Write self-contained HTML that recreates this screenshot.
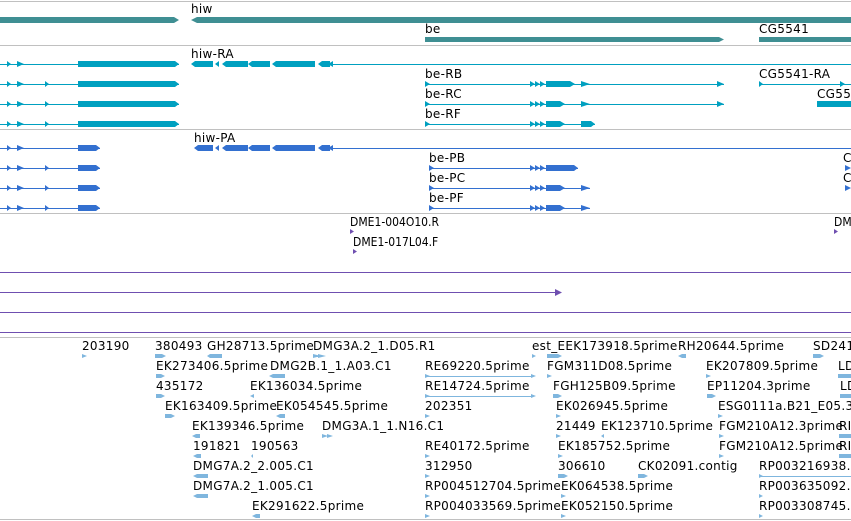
<!DOCTYPE html>
<html><head><meta charset="utf-8"><style>
html,body{margin:0;padding:0;background:#fff;width:851px;height:521px;overflow:hidden}
svg{display:block}
text{font-family:"DejaVu Sans","Liberation Sans",sans-serif;font-size:12px;fill:#000;letter-spacing:0.3px}
.c text{font-family:"DejaVu Sans Condensed","DejaVu Sans",sans-serif;font-stretch:condensed;letter-spacing:0}
</style></head><body>
<svg width="851" height="521" viewBox="0 0 851 521" xmlns="http://www.w3.org/2000/svg">
<g stroke="#c0c0c0" stroke-width="1">
<line x1="0" y1="1.5" x2="851" y2="1.5"/>
<line x1="0" y1="45.5" x2="851" y2="45.5"/>
<line x1="0" y1="129.5" x2="851" y2="129.5"/>
<line x1="0" y1="213.5" x2="851" y2="213.5"/>
<line x1="0" y1="337.5" x2="851" y2="337.5"/>
<line x1="0" y1="519.5" x2="851" y2="519.5"/>
</g>
<g fill="#3f8f93">
<polygon points="0,17 174,17 179,20 174,23 0,23"/>
<polygon points="191,20 197,17 851,17 851,23 197,23"/>
<polygon points="425,37 719,37 724,39.5 719,42 425,42"/>
<rect x="759" y="37" width="92" height="5"/>
</g>
<text x="191" y="13">hiw</text>
<text x="425" y="33">be</text>
<text x="759" y="33">CG5541</text>
<g fill="#00a0c0" stroke="none">
<rect x="0" y="64" width="179" height="1"/><rect x="0" y="84" width="179" height="1"/><rect x="0" y="104" width="179" height="1"/><rect x="0" y="124" width="179" height="1"/>
<rect x="333" y="64" width="518" height="1"/>
<rect x="425" y="84" width="299" height="1"/><rect x="425" y="104" width="299" height="1"/><rect x="425" y="124" width="170" height="1"/>
<rect x="759" y="84" width="92" height="1"/>
</g>
<g fill="#00a0c0">
<path d="M7,61 11,64 7,67Z M17,61 24,64 17,67Z M78,61 175,61 179,64 175,67 78,67Z"/>
<path d="M7,81 11,84 7,87Z M17,81 24,84 17,87Z M45,81 49,84 45,87Z M78,81 175,81 179,84 175,87 78,87Z"/>
<path d="M7,101 11,104 7,107Z M17,101 24,104 17,107Z M45,101 49,104 45,107Z M78,101 175,101 179,104 175,107 78,107Z"/>
<path d="M7,121 11,124 7,127Z M17,121 24,124 17,127Z M45,121 49,124 45,127Z M78,121 175,121 179,124 175,127 78,127Z"/>
<path d="M191,64 195,61 213,61 213,67 195,67Z M203,64 207,61 207,67Z M209,64 213,61 213,67Z M215,64 219,61 219,67Z M222,64 226,61 248,61 248,67 226,67Z M248,64 252,61 270,61 270,67 252,67Z M272,64 276,61 315,61 315,67 276,67Z M318,64 322,61 330,61 330,67 322,67Z M328,64 333,61 333,67Z"/>
<path d="M425,81 430,84 425,87Z M530,81 535,84 530,87Z M535,81 540,84 535,87Z M540,81 545,84 540,87Z M546,81 570,81 575,84 570,87 546,87Z M581,81 590,84 581,87Z M717,81 724,84 717,87Z"/>
<path d="M425,101 430,104 425,107Z M530,101 535,104 530,107Z M535,101 540,104 535,107Z M540,101 545,104 540,107Z M546,101 560,101 565,104 560,107 546,107Z M581,101 590,104 581,107Z M717,101 724,104 717,107Z"/>
<path d="M425,121 430,124 425,127Z M530,121 535,124 530,127Z M535,121 540,124 535,127Z M540,121 545,124 540,127Z M546,121 560,121 565,124 560,127 546,127Z M581,121 591,121 595,124 591,127 581,127Z"/>
<path d="M759,81 763,84 759,87Z M840,81 845,84 840,87Z M817,101 851,101 851,107 817,107Z"/>
</g>
<text x="191" y="58">hiw-RA</text>
<text x="425" y="78">be-RB</text>
<text x="425" y="98">be-RC</text>
<text x="425" y="118">be-RF</text>
<text x="759" y="78">CG5541-RA</text>
<text x="817" y="98">CG55</text>
<g fill="#3370d0">
<rect x="0" y="148" width="100" height="1"/><rect x="0" y="168" width="100" height="1"/><rect x="0" y="188" width="100" height="1"/><rect x="0" y="208" width="100" height="1"/>
<rect x="333" y="148" width="518" height="1"/>
<rect x="429" y="168" width="149" height="1"/><rect x="429" y="188" width="161" height="1"/><rect x="429" y="208" width="161" height="1"/>
<path d="M7,145 11,148 7,151Z M17,145 24,148 17,151Z M78,145 96,145 100,148 96,151 78,151Z"/>
<path d="M7,165 11,168 7,171Z M17,165 24,168 17,171Z M45,165 49,168 45,171Z M78,165 96,165 100,168 96,171 78,171Z"/>
<path d="M7,185 11,188 7,191Z M17,185 24,188 17,191Z M45,185 49,188 45,191Z M78,185 96,185 100,188 96,191 78,191Z"/>
<path d="M7,205 11,208 7,211Z M17,205 24,208 17,211Z M45,205 49,208 45,211Z M78,205 96,205 100,208 96,211 78,211Z"/>
<path d="M194,148 198,145 213,145 213,151 198,151Z M203,148 207,145 207,151Z M209,148 213,145 213,151Z M215,148 219,145 219,151Z M222,148 226,145 248,145 248,151 226,151Z M248,148 252,145 270,145 270,151 252,151Z M272,148 276,145 315,145 315,151 276,151Z M318,148 322,145 330,145 330,151 322,151Z M328,148 333,145 333,151Z"/>
<path d="M429,165 434,168 429,171Z M530,165 535,168 530,171Z M535,165 540,168 535,171Z M540,165 545,168 540,171Z M546,165 574,165 578,168 574,171 546,171Z"/>
<path d="M429,185 434,188 429,191Z M530,185 535,188 530,191Z M535,185 540,188 535,191Z M540,185 545,188 540,191Z M546,185 560,185 565,188 560,191 546,191Z M581,185 590,188 581,191Z"/>
<path d="M429,205 434,208 429,211Z M530,205 535,208 530,211Z M535,205 540,208 535,211Z M540,205 545,208 540,211Z M546,205 560,205 565,208 560,211 546,211Z M581,205 590,208 581,211Z"/>
<path d="M845,165 851,168 845,171Z M845,185 851,188 845,191Z"/>
</g>
<text x="191" y="142" dx="3">hiw-PA</text>
<text x="429" y="162">be-PB</text>
<text x="429" y="182">be-PC</text>
<text x="429" y="202">be-PF</text>
<text x="843" y="162">C</text>
<text x="843" y="182">C</text>
<g class="c">
<text x="350" y="226">DME1-004O10.R</text>
<text x="353" y="246">DME1-017L04.F</text>
<text x="834" y="226">DM</text>
</g>
<g fill="#6f4fb0">
<path d="M350,229 354,231.5 350,234Z M353,249 357,251.5 353,254Z M834,229 838,231.5 834,234Z"/>
<rect x="0" y="272" width="851" height="1"/>
<rect x="0" y="292" width="556" height="1"/>
<path d="M555,289 562,292.5 555,296Z"/>
<rect x="0" y="312" width="851" height="1"/>
<rect x="0" y="332" width="851" height="1"/>
</g>
<g>
<text x="82" y="350">203190</text>
<text x="155" y="350">380493</text>
<text x="207" y="350">GH28713.5prime</text>
<text x="313" y="350">DMG3A.2_1.D05.R1</text>
<text x="532" y="350">est_EEK173918.5prime</text>
<text x="678" y="350">RH20644.5prime</text>
<text x="813" y="350">SD241</text>
<text x="156" y="370">EK273406.5prime</text>
<text x="270" y="370">DMG2B.1_1.A03.C1</text>
<text x="425" y="370">RE69220.5prime</text>
<text x="547" y="370">FGM311D08.5prime</text>
<text x="706" y="370">EK207809.5prime</text>
<text x="838" y="370">LD</text>
<text x="156" y="390">435172</text>
<text x="250" y="390">EK136034.5prime</text>
<text x="425" y="390">RE14724.5prime</text>
<text x="553" y="390">FGH125B09.5prime</text>
<text x="707" y="390">EP11204.3prime</text>
<text x="840" y="390">LD</text>
<text x="165" y="410">EK163409.5prime</text>
<text x="276" y="410">EK054545.5prime</text>
<text x="425" y="410">202351</text>
<text x="556" y="410">EK026945.5prime</text>
<text x="718" y="410">ESG0111a.B21_E05.3p</text>
<text x="192" y="430">EK139346.5prime</text>
<text x="322" y="430">DMG3A.1_1.N16.C1</text>
<text x="556" y="430">21449</text>
<text x="601" y="430">EK123710.5prime</text>
<text x="719" y="430">FGM210A12.3prime</text>
<text x="839" y="430">RI</text>
<text x="193" y="450">191821</text>
<text x="251" y="450">190563</text>
<text x="425" y="450">RE40172.5prime</text>
<text x="558" y="450">EK185752.5prime</text>
<text x="719" y="450">FGM210A12.5prime</text>
<text x="839" y="450">RI</text>
<text x="193" y="470">DMG7A.2_2.005.C1</text>
<text x="425" y="470">312950</text>
<text x="558" y="470">306610</text>
<text x="638" y="470">CK02091.contig</text>
<text x="759" y="470">RP003216938.</text>
<text x="193" y="490">DMG7A.2_1.005.C1</text>
<text x="425" y="490">RP004512704.5prime</text>
<text x="561" y="490">EK064538.5prime</text>
<text x="759" y="490">RP003635092.</text>
<text x="252" y="510">EK291622.5prime</text>
<text x="425" y="510">RP004033569.5prime</text>
<text x="561" y="510">EK052150.5prime</text>
<text x="759" y="510">RP003308745.</text>
</g>
<g fill="#7fb6de">
<path d="M82,354 87,356 82,358Z M155,354 162,354 166,356 162,358 155,358Z M207,356 210,354 222,354 222,358 210,358Z M313,354 321,356 313,358Z M318,354 326,356 318,358Z M532,354 536,356 532,358Z M547,354 558,354 562,356 558,358 547,358Z M678,356 682,354 686,354 686,358 682,358Z M813,354 820,354 824,356 820,358 813,358Z"/>
<path d="M156,374 161,374 165,376 161,378 156,378Z M269,376 273,374 285,374 285,378 273,378Z M425,376 531,376 531,377 425,377Z M425,374 430,376 425,378Z M531,374 536,376 531,378Z M547,374 552,376 547,378Z M706,374 711,376 706,378Z M838,374 851,374 851,378 838,378Z"/>
<path d="M156,394 161,394 165,396 161,398 156,398Z M250,396 254,394 254,398Z M425,396 531,396 531,397 425,397Z M425,394 430,396 425,398Z M531,394 536,396 531,398Z M553,394 558,394 562,396 558,398 553,398Z M707,394 712,394 716,396 712,398 707,398Z M840,394 851,394 851,398 840,398Z"/>
<path d="M165,414 171,414 175,416 171,418 165,418Z M276,416 280,414 285,414 285,418 280,418Z M425,414 430,416 425,418Z M556,414 561,416 556,418Z M718,414 723,416 718,418Z"/>
<path d="M192,436 196,434 200,434 200,438 196,438Z M322,434 328,436 322,438Z M327,434 333,436 327,438Z M556,434 561,436 556,438Z M601,436 604,434 604,438Z M719,434 724,436 719,438Z M839,434 851,434 851,438 839,438Z"/>
<path d="M193,456 197,454 201,454 201,458 197,458Z M251,456 253,454 253,458Z M425,454 430,456 425,458Z M558,454 563,456 558,458Z M719,454 724,456 719,458Z M839,454 851,454 851,458 839,458Z"/>
<path d="M193,476 197,474 208,474 208,478 197,478Z M425,474 430,476 425,478Z M558,474 564,474 568,476 564,478 558,478Z M638,474 644,474 648,476 644,478 638,478Z M759,476 851,476 851,477 759,477Z M759,474 763,476 759,478Z"/>
<path d="M193,496 197,494 208,494 208,498 197,498Z M425,494 430,496 425,498Z M561,494 566,496 561,498Z M759,494 763,496 759,498Z"/>
<path d="M252,516 256,514 260,514 260,518 256,518Z M425,514 430,516 425,518Z M561,514 566,516 561,518Z M759,514 763,516 759,518Z"/>
</g>
</svg>
</body></html>
